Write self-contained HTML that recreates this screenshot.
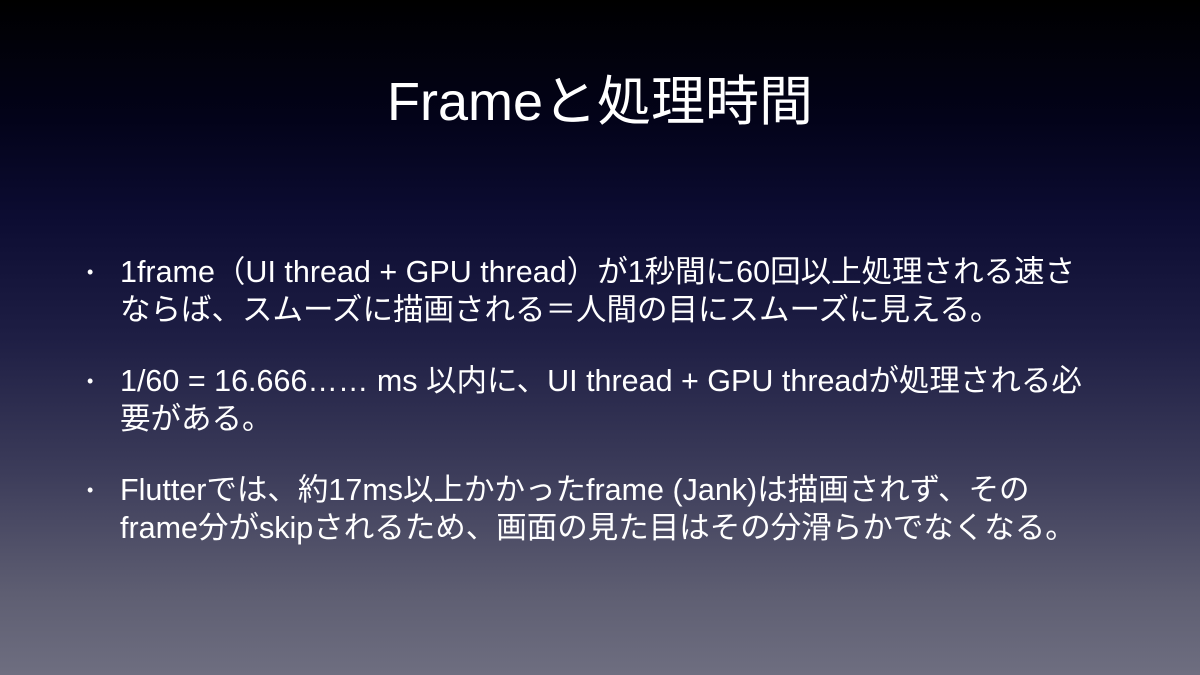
<!DOCTYPE html>
<html><head><meta charset="utf-8"><style>
html,body{margin:0;padding:0}
body{width:1200px;height:675px;overflow:hidden;position:relative;
background:linear-gradient(180deg,#000 0%,#03031a 18%,#0c0c32 32%,#1e1e44 50%,#3c3c5a 70%,#5e5e72 88%,#6e6e80 100%);
font-family:"Liberation Sans","Noto Sans CJK JP",sans-serif;color:#fff}
h1{position:absolute;top:70px;left:0;width:1200px;text-align:center;margin:0;font-weight:normal;font-size:54px;line-height:64px}
.b{position:absolute;left:120px;font-size:30.5px;line-height:38px;white-space:nowrap}
.b:before{content:"•";position:absolute;left:-33px;font-size:18px}
</style></head><body>
<h1>Frameと処理時間</h1>
<div class="b" style="top:253px">1frame（UI thread + GPU thread）が1秒間に60回以上処理される速さ<br>ならば、スムーズに描画される＝人間の目にスムーズに見える。</div>
<div class="b" style="top:362px">1/60 = 16.666…… ms 以内に、UI thread + GPU threadが処理される必<br>要がある。</div>
<div class="b" style="top:471px">Flutterでは、約17ms以上かかったframe (Jank)は描画されず、その<br>frame分がskipされるため、画面の見た目はその分滑らかでなくなる。</div>
</body></html>
